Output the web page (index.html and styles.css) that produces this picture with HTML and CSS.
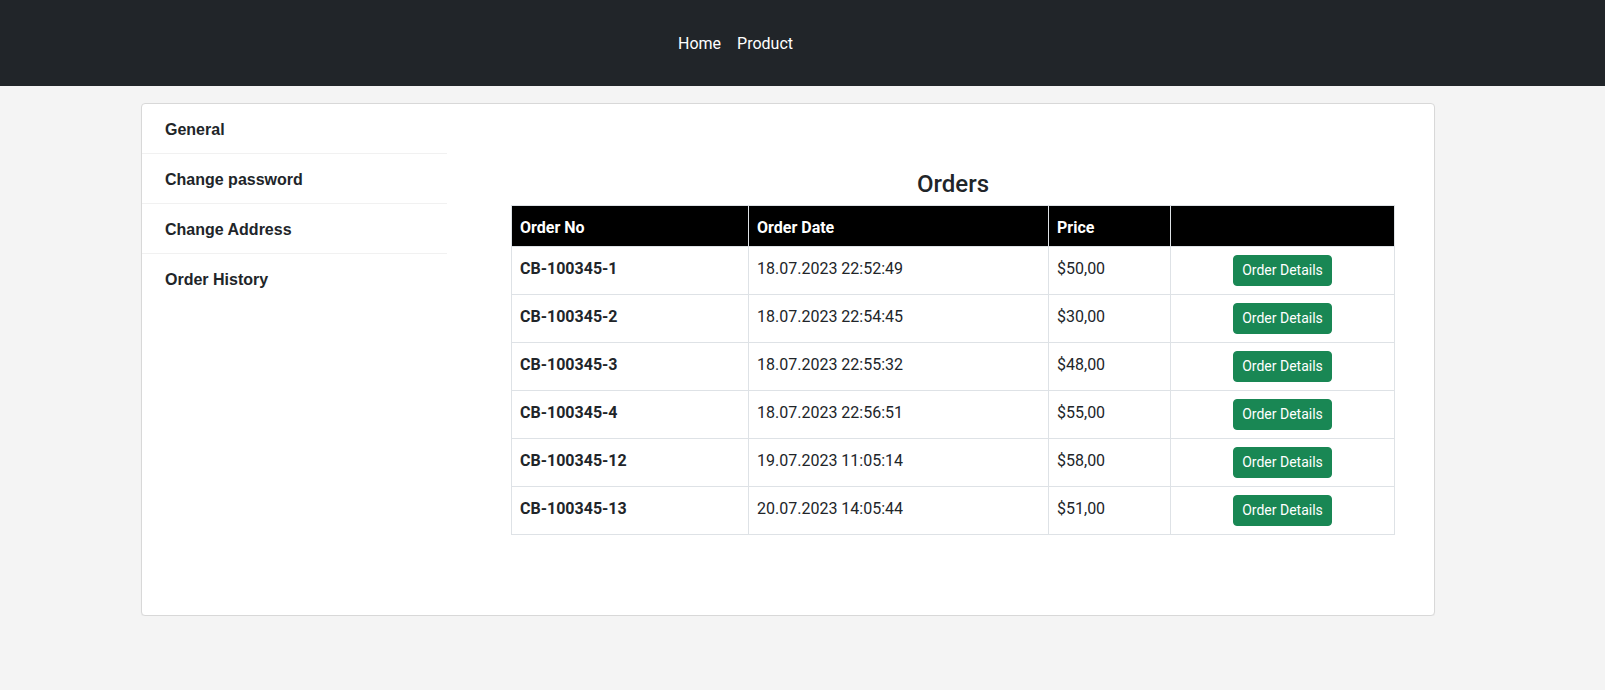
FILE: index.html
```html
<!DOCTYPE html>
<html lang="en">
<head>
<meta charset="utf-8">
<title>Orders</title>
<link rel="stylesheet" href="styles.css">
</head>
<body>
<nav class="navbar">
  <ul class="nav-links">
    <li><a href="#" class="nav-link">Home</a></li>
    <li><a href="#" class="nav-link">Product</a></li>
  </ul>
</nav>
<div class="card">
  <aside class="sidebar">
    <a href="#" class="side-item">General</a>
    <a href="#" class="side-item">Change password</a>
    <a href="#" class="side-item">Change Address</a>
    <a href="#" class="side-item last">Order History</a>
  </aside>
  <main class="main">
    <h4 class="title">Orders</h4>
    <table class="orders">
      <colgroup>
        <col class="c1"><col class="c2"><col class="c3"><col class="c4">
      </colgroup>
      <thead>
        <tr><th>Order No</th><th>Order Date</th><th>Price</th><th></th></tr>
      </thead>
      <tbody>
        <tr><th class="no">CB-100345-1</th><td>18.07.2023 22:52:49</td><td>$50,00</td><td class="act"><button class="btn">Order Details</button></td></tr>
        <tr><th class="no">CB-100345-2</th><td>18.07.2023 22:54:45</td><td>$30,00</td><td class="act"><button class="btn">Order Details</button></td></tr>
        <tr><th class="no">CB-100345-3</th><td>18.07.2023 22:55:32</td><td>$48,00</td><td class="act"><button class="btn">Order Details</button></td></tr>
        <tr><th class="no">CB-100345-4</th><td>18.07.2023 22:56:51</td><td>$55,00</td><td class="act"><button class="btn">Order Details</button></td></tr>
        <tr><th class="no">CB-100345-12</th><td>19.07.2023 11:05:14</td><td>$58,00</td><td class="act"><button class="btn">Order Details</button></td></tr>
        <tr><th class="no">CB-100345-13</th><td>20.07.2023 14:05:44</td><td>$51,00</td><td class="act"><button class="btn">Order Details</button></td></tr>
      </tbody>
    </table>
  </main>
</div>
</body>
</html>
```
FILE: styles.css
```css
* { box-sizing: border-box; }
body {
  margin: 0;
  background: #f4f4f4;
  font-family: Roboto, "Noto Sans", sans-serif;
  font-size: 16px;
  color: #212529;
}
.navbar {
  height: 86px;
  background: #212529;
  display: flex;
  align-items: center;
}
.nav-links {
  list-style: none;
  margin: 0 0 0 670px;
  padding: 2px 0 0;
  display: flex;
}
.nav-link {
  display: block;
  padding: 0 8px;
  color: #ffffff;
  text-decoration: none;
  font-size: 16px;
  line-height: 24px;
}
.card {
  width: 1294px;
  margin: 17px 0 0 141px;
  background: #ffffff;
  border: 1px solid #d8d8d8;
  border-radius: 4px;
  box-shadow: 0 1px 1px rgba(0,0,0,0.04);
  display: flex;
}
.sidebar {
  width: 305px;
  flex: none;
  display: flex;
  flex-direction: column;
}
.side-item {
  display: block;
  padding: 17px 0 14px 23px;
  line-height: 18px;
  font-family: "Liberation Sans", Arial, sans-serif;
  font-weight: bold;
  font-size: 16px;
  color: #212529;
  text-decoration: none;
  border-bottom: 1px solid #f1f1f1;
}
.side-item.last { border-bottom: none; }
.main {
  flex: 1;
  padding: 66px 40px 80px 64px;
}
.title {
  margin: 0 0 6px;
  text-align: center;
  font-size: 24px;
  font-weight: 500;
  line-height: 29px;
  color: #212529;
}
.orders {
  width: 883px;
  table-layout: fixed;
  border-collapse: collapse;
  border: 1px solid #dee2e6;
}
.c1 { width: 237px; }
.c2 { width: 300px; }
.c3 { width: 122px; }
.c4 { width: 224px; }
.orders th, .orders td {
  border: 1px solid #dee2e6;
  padding: 10px 8px 6px;
  line-height: 24px;
  text-align: left;
  vertical-align: top;
  font-size: 16px;
}
.orders thead th {
  background: #000000;
  color: #ffffff;
  font-weight: bold;
}
.orders td { font-weight: normal; color: #212529; }
.orders .no { font-weight: bold; color: #212529; }
.orders .act {
  text-align: center;
  padding: 8px;
}
.btn {
  display: inline-block;
  vertical-align: top;
  height: 31px;
  padding: 4px 8px;
  font-family: Roboto, "Noto Sans", sans-serif;
  font-size: 14px;
  line-height: 21px;
  color: #ffffff;
  background: #198754;
  border: 1px solid #198754;
  border-radius: 4px;
  cursor: pointer;
}
```
